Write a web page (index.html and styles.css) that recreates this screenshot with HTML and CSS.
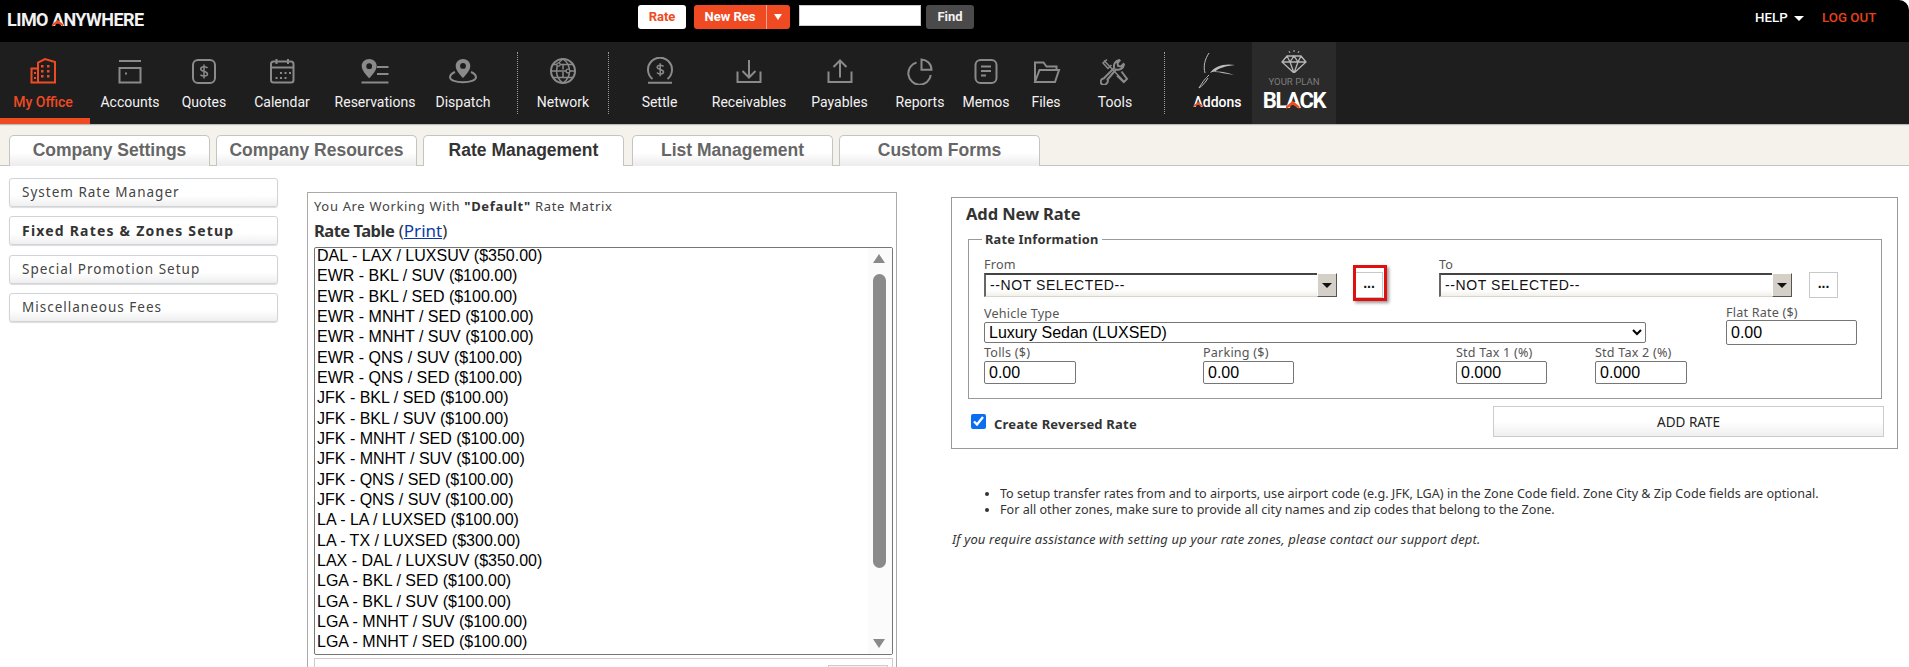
FILE: index.html
```html
<!DOCTYPE html>
<html lang="en">
<head>
<meta charset="utf-8">
<title>Limo Anywhere - Rate Management</title>
<link rel="stylesheet" href="styles.css">
</head>
<body>
<header class="topbar">
  <div class="logo">LIMO <span class="chev-a">A</span>NYWHERE</div>
  <div class="quick">
    <button class="btn-rate">Rate</button>
    <div class="btn-new"><span class="new-label">New Res</span><span class="new-caret"></span></div>
    <input class="find-input" type="text">
    <button class="btn-find">Find</button>
  </div>
  <div class="help"><span>HELP</span><span class="help-caret"></span></div>
  <div class="logout">LOG OUT</div>
</header>

<nav class="nav">
  <a class="item active w90">
    <svg class="ico" viewBox="0 0 30 28"><path d="M3.500 11.500h6.500v14H3.500zM10 25.500V5.500l7-3.500 10 3v20.500zM3.500 25.500h23.500"/><path class="dots" d="M13 8h2.500v2.500H13zM19 8h2.500v2.500H19zM13 13h2.500v2.500H13zM19 13h2.500v2.500H19zM13 18h2.500v2.500H13zM19 18h2.500v2.500H19zM6 15h2v2H6zM6 20h2v2H6z"/></svg>
    <span>My Office</span>
  </a>
  <a class="item w80">
    <svg class="ico" viewBox="0 0 30 28"><path d="M4 4h22M4.500 11h21v14.500h-21z"/><path class="dots" d="M10 15.500h2v2h-2z"/></svg>
    <span>Accounts</span>
  </a>
  <a class="item w68">
    <svg class="ico" viewBox="0 0 30 28"><rect x="4" y="3" width="22" height="23" rx="5"/><path class="thin" d="M18.500 11c-1-1.700-6.500-2-6.800.8-.3 3 6.800 2 6.800 5.200 0 2.700-5.800 2.700-7 .6M15 7.500v14"/></svg>
    <span>Quotes</span>
  </a>
  <a class="item w88">
    <svg class="ico" viewBox="0 0 30 28"><rect x="4" y="4.500" width="22.500" height="21" rx="2.500"/><path d="M4 10.500h22.500M9.500 2v5M21 2v5"/><path class="dots" d="M13 15h2v2h-2zM17.500 15h2v2h-2zM22 15h2v2h-2zM8.500 20h2v2h-2zM13 20h2v2h-2zM17.500 20h2v2h-2z"/></svg>
    <span>Calendar</span>
  </a>
  <a class="item w98">
    <svg class="ico" viewBox="0 0 30 28"><path class="fill" fill-rule="evenodd" d="M9.200 2c4.200 0 7.500 3.100 7.500 7 0 4.200-4.300 9-7.500 12.300C6 18 1.700 13.200 1.700 9c0-3.900 3.300-7 7.500-7zm0 4.300a2.900 2.900 0 1 0 0 5.800 2.900 2.900 0 0 0 0-5.800z"/><path d="M17 10h11.500M17 17h11.500M1.500 25.500h27"/></svg>
    <span>Reservations</span>
  </a>
  <a class="item w78">
    <svg class="ico" viewBox="0 0 30 28"><path class="fill" fill-rule="evenodd" d="M15 2c4.100 0 7.300 3 7.300 6.900 0 4.100-4.100 8.700-7.300 12-3.200-3.300-7.300-7.900-7.300-12C7.700 5 10.900 2 15 2zm0 4a2.900 2.900 0 1 0 0 5.800A2.900 2.900 0 0 0 15 6z"/><path d="M7 15c-3 1.300-5 3-5 5.300 0 3 6 5 13 5s13-2 13-5c0-2.300-2-4-5-5.300"/></svg>
    <span>Dispatch</span>
  </a>
  <i class="sep sep-a"></i>
  <a class="item w90">
    <svg class="ico" viewBox="0 0 30 28"><circle cx="15" cy="14" r="12"/><path class="thin" d="M5 7.500h20M3 14h24M5 20.500h20M15 2c-4.500 3-6.500 7-6.500 12s2 9 6.500 12M15 2c4.500 3 6.500 7 6.500 12s-2 9-6.500 12M15 7.500v5M15 15v5"/><circle class="knob" cx="10.500" cy="7.500" r="1.700"/><circle class="knob" cx="20" cy="14" r="1.900"/></svg>
    <span>Network</span>
  </a>
  <i class="sep"></i>
  <a class="item w101">
    <svg class="ico" viewBox="0 0 30 28"><path d="M7.500 22a12 12 0 1 1 15 0M3 25.700h24"/><path class="thin" d="M18.500 9.500c-1-1.600-6-1.900-6.300.7-.3 2.800 6.300 1.900 6.300 4.800 0 2.500-5.400 2.500-6.500.5M15.200 6.300v13"/></svg>
    <span>Settle</span>
  </a>
  <a class="item w78">
    <svg class="ico" viewBox="0 0 30 28"><path d="M3.500 14.500v10.500h23V14.500M15 3v17M8.500 14l6.500 6.500 6.500-6.500"/></svg>
    <span>Receivables</span>
  </a>
  <a class="item w103">
    <svg class="ico" viewBox="0 0 30 28"><path d="M3.500 14.500v10.500h23V14.500M15 20.500V3.500M8.500 10l6.500-6.500 6.500 6.500"/></svg>
    <span>Payables</span>
  </a>
  <a class="item w58">
    <svg class="ico" viewBox="0 0 30 28"><path d="M11.500 5.500A11.300 11.300 0 1 0 25.800 18"/><path d="M16.500 2.500c5.400.2 10 4.400 10 10.300h-10z"/></svg>
    <span>Reports</span>
  </a>
  <a class="item w70 after-reports">
    <svg class="ico" viewBox="0 0 30 28"><rect x="4.500" y="3" width="21" height="23" rx="5"/><path d="M10 9.500h10M10 14h10M10 18.500h5"/></svg>
    <span>Memos</span>
  </a>
  <a class="item w50">
    <svg class="ico" viewBox="0 0 30 28"><path d="M4 25V5.500h8.500l3 4h10v3.500M4 25l4.500-12H28l-4 12z"/></svg>
    <span>Files</span>
  </a>
  <a class="item w88">
    <svg class="ico" viewBox="0 0 30 28"><path class="thin" d="M4 3.500l20 21M7 2.500L3 6l5 5.500 3.500-3.500"/><path d="M21.500 14.500l5.500 7.500-3.200 3-6.800-6.500"/><path d="M6.500 26.500a3.200 3.200 0 1 1-2.800-5l10.500-10.500c-1-3.500 1-7 5-8l.5.5-2.200 2.500.5 3 3 .5 2.500-2.500.5.5c-.7 4-4.500 6-8 5L7.500 22.500c.5 1 .2 3-1 4z"/></svg>
    <span>Tools</span>
  </a>
  <i class="sep sep-last"></i>
  <a class="item addons">
    <svg class="addons-logo" viewBox="0 0 40 36"><path d="M11 0C7 6 5 13 7 20"/><path class="swoosh" d="M37 12C27 10 16 13 12 20c6-3 15-1 24 2-8-1-14-3-19-3 3-4 11-6 20-7z"/><path d="M11 22C8 25 5 28 1 35c3-2 7-6 9-10"/></svg>
    <span><span class="chev-a">A</span>ddons</span>
  </a>
  <a class="plan">
    <svg class="diamond" viewBox="0 0 26 24"><path d="M6 7h14l5 6-12 11L1 13zM1 13h24M9 13l4 11 4-11-4-6zM6 7l3 6M20 7l-3 6"/><path class="spark" d="M8 2l1 2M13 1v2M18 2l-1 2"/></svg>
    <span class="plan-your">YOUR PLAN</span>
    <span class="plan-black">BL<span class="chev-a">A</span>CK</span>
  </a>
</nav>

<div class="tabs">
  <div class="tab">Company Settings</div>
  <div class="tab">Company Resources</div>
  <div class="tab tab-active">Rate Management</div>
  <div class="tab tab-next">List Management</div>
  <div class="tab">Custom Forms</div>
</div>

<main class="main">
  <aside class="side">
    <a class="side-btn">System Rate Manager</a>
    <a class="side-btn side-on">Fixed Rates &amp; Zones Setup</a>
    <a class="side-btn">Special Promotion Setup</a>
    <a class="side-btn">Miscellaneous Fees</a>
  </aside>

  <section class="table-panel">
    <p class="matrix">You Are Working With <b>"Default"</b> Rate Matrix</p>
    <h2 class="table-title"><b>Rate Table</b> (<a class="print" href="#">Print</a>)</h2>
    <div class="listbox">
      <ul class="rates">
        <li>DAL - LAX / LUXSUV ($350.00)</li>
        <li>EWR - BKL / SUV ($100.00)</li>
        <li>EWR - BKL / SED ($100.00)</li>
        <li>EWR - MNHT / SED ($100.00)</li>
        <li>EWR - MNHT / SUV ($100.00)</li>
        <li>EWR - QNS / SUV ($100.00)</li>
        <li>EWR - QNS / SED ($100.00)</li>
        <li>JFK - BKL / SED ($100.00)</li>
        <li>JFK - BKL / SUV ($100.00)</li>
        <li>JFK - MNHT / SED ($100.00)</li>
        <li>JFK - MNHT / SUV ($100.00)</li>
        <li>JFK - QNS / SED ($100.00)</li>
        <li>JFK - QNS / SUV ($100.00)</li>
        <li>LA - LA / LUXSED ($100.00)</li>
        <li>LA - TX / LUXSED ($300.00)</li>
        <li>LAX - DAL / LUXSUV ($350.00)</li>
        <li>LGA - BKL / SED ($100.00)</li>
        <li>LGA - BKL / SUV ($100.00)</li>
        <li>LGA - MNHT / SUV ($100.00)</li>
        <li>LGA - MNHT / SED ($100.00)</li>
      </ul>
      <div class="scroll">
        <i class="arrow-up"></i>
        <i class="thumb"></i>
        <i class="arrow-down"></i>
      </div>
    </div>
    <div class="table-foot"><i class="foot-btn"></i></div>
  </section>

  <div class="right">
    <section class="add-panel">
      <h2 class="add-title">Add New Rate</h2>
      <fieldset class="info">
        <legend class="legend">Rate Information</legend>
        <div class="row row-zones">
          <div class="field f-from">
            <label class="lbl">From</label>
            <div class="combo"><span class="combo-text">--NOT SELECTED--</span><i class="combo-btn"></i></div>
          </div>
          <div class="more-wrap more-hl"><button class="more">...</button></div>
          <div class="field f-to">
            <label class="lbl">To</label>
            <div class="combo"><span class="combo-text">--NOT SELECTED--</span><i class="combo-btn"></i></div>
          </div>
          <div class="more-wrap more-2"><button class="more">...</button></div>
        </div>
        <div class="row row-vehicle">
          <div class="field f-vehicle">
            <label class="lbl">Vehicle Type</label>
            <select class="vehicle"><option>Luxury Sedan (LUXSED)</option></select>
          </div>
          <div class="field f-flat">
            <label class="lbl lbl-flat">Flat Rate ($)</label>
            <input class="num num-flat" type="text" value="0.00">
          </div>
        </div>
        <div class="row row-fees">
          <div class="field f-tolls"><label class="lbl">Tolls ($)</label><input class="num" type="text" value="0.00"></div>
          <div class="field f-park"><label class="lbl">Parking ($)</label><input class="num" type="text" value="0.00"></div>
          <div class="field f-tax1"><label class="lbl">Std Tax 1 (%)</label><input class="num" type="text" value="0.000"></div>
          <div class="field f-tax2"><label class="lbl">Std Tax 2 (%)</label><input class="num" type="text" value="0.000"></div>
        </div>
      </fieldset>
      <div class="actions">
        <label class="reverse"><input class="check" type="checkbox" checked><span class="rev-text">Create Reversed Rate</span></label>
        <button class="add-btn">ADD RATE</button>
      </div>
    </section>
    <ul class="notes">
      <li>To setup transfer rates from and to airports, use airport code (e.g. JFK, LGA) in the Zone Code field. Zone City &amp; Zip Code fields are optional.</li>
      <li>For all other zones, make sure to provide all city names and zip codes that belong to the Zone.</li>
    </ul>
    <p class="assist">If you require assistance with setting up your rate zones, please contact our support dept.</p>
  </div>
</main>
</body>
</html>
```

FILE: styles.css
```css
* { box-sizing: border-box; }
html, body { margin: 0; padding: 0; height: 667px; overflow: hidden; background: #fff; }
body { font-family: "Noto Sans", sans-serif; color: #333; width: 1909px; }

/* top bar */
.topbar {
  height: 42px; background: #000; border-top-right-radius: 10px;
  display: flex; align-items: flex-start; font-family: Roboto, sans-serif;
}
.logo {
  width: 638px; padding: 10px 0 0 7px; color: #f2f2f2;
  font-size: 18px; font-weight: 700; line-height: 20px; white-space: nowrap; letter-spacing: -.55px;
}
.chev-a { position: relative; display: inline-block; }
.chev-a::after {
  content: ""; position: absolute; left: 0; right: 0; bottom: 17%; height: 34%;
  background: #f04a23; clip-path: polygon(50% 0, 100% 70%, 100% 100%, 50% 50%, 0 100%, 0 70%);
}
.quick { display: flex; align-items: flex-start; padding-top: 5px; width: 1117px; }
.btn-rate, .btn-find, .btn-new {
  height: 24px; border: 0; border-radius: 3px; font: 700 13px/24px Roboto, sans-serif; padding: 0;
}
.btn-rate { width: 48px; background: #fff; color: #f04a23; }
.btn-new {
  width: 96px; margin-left: 8px; background: #f04a23; color: #fff; display: flex;
}
.new-label { width: 73px; text-align: center; border-right: 1px solid #f9a48f; }
.new-caret { width: 0; height: 0; margin: 9px 0 0 7px; border: 4.500px solid transparent; border-top: 6px solid #fff; border-bottom: 0; }
.find-input { width: 122px; height: 21px; margin-left: 9px; background: #fff; border: 1px solid #ccc; padding: 0; }
.btn-find { width: 48px; margin-left: 5px; background: #4a4a4a; color: #f2f2f2; }
.help { display: flex; width: 67px; padding-top: 10px; color: #fff; font: 500 13.300px/16px Roboto, sans-serif; }
.help-caret { width: 0; height: 0; margin: 6px 0 0 6px; border: 5px solid transparent; border-top: 5px solid #fff; border-bottom: 0; }
.logout { padding-top: 10px; color: #e8401c; font: 500 13.300px/16px Roboto, sans-serif; }

/* icon nav */
.nav {
  height: 82px; background: #1e1e1e; display: flex; font-family: Roboto, sans-serif;
  box-shadow: 0 1px 1px #bbb; position: relative;
}
.item { display: flex; flex-direction: column; align-items: center; padding-top: 15px; color: #f2f2f2; font-size: 14px; line-height: 16px; white-space: nowrap; }
.item > span { display: block; margin-top: 9px; }
.active { color: #f04a23; border-bottom: 6px solid #f04a23; padding-right: 4px; font-weight: 500; }
.w50 { width: 50px; } .w58 { width: 58px; } .w68 { width: 68px; } .w70 { width: 70px; }
.w78 { width: 78px; } .w80 { width: 80px; } .w88 { width: 88px; }
.w90 { width: 90px; } .w98 { width: 98px; } .w101 { width: 101px; } .w103 { width: 103px; }
.after-reports { margin-left: 2px; }
.ico { width: 30px; height: 28px; fill: none; stroke: #8a8a8a; stroke-width: 2; }
.ico .thin { stroke-width: 1.500; }
.ico .dots { fill: #8a8a8a; stroke: none; }
.ico .fill { fill: #8a8a8a; stroke: none; }
.ico .knob { fill: #1e1e1e; stroke-width: 1.300; }
.active .ico { stroke: #f04a23; }
.active .ico .dots { fill: #f04a23; }
.sep { width: 0; height: 62px; margin-top: 10px; border-left: 1px dotted #999; }
.sep-a { margin-left: 15px; }
.sep-last { margin-left: 5px; }
.addons { width: 87px; padding: 11px 0 0 18px; }
.addons-logo { width: 40px; height: 36px; flex: none; fill: none; stroke: #bdbdbd; stroke-width: 1; }
.addons-logo .swoosh { fill: #bdbdbd; stroke: none; }
.addons > span { margin-top: 5px; font-weight: 500; color: #fff; }
.plan { width: 84px; height: 82px; background: #2a2a2a; display: flex; flex-direction: column; align-items: center; padding-top: 7px; font-family: Roboto, sans-serif; }
.diamond { width: 26px; height: 24px; flex: none; fill: none; stroke: #b5b5b5; stroke-width: 1.300; }
.spark { stroke: #b5b5b5; stroke-width: 1; }
.plan-your { color: #7d7d7d; font-size: 9.600px; line-height: 12px; margin-top: 3px; white-space: nowrap; }
.plan-black { color: #fff; font-size: 22px; font-weight: 700; line-height: 24px; margin-top: 1px; letter-spacing: -1.300px; }

/* tabs */
.tabs {
  height: 42px; background: #f5f2ec; border-bottom: 1px solid #c4c4c4; padding: 11px 0 0 9px;
  display: flex; gap: 6px;
}
.tab {
  width: 201px; height: 31px; border: 1px solid #c4c4c4; border-bottom: 0; border-radius: 5px 5px 0 0;
  background: linear-gradient(#fff 55%, #ececec);
  color: #666; font: 700 17.500px/29px "Liberation Sans", sans-serif; text-align: center; white-space: nowrap;
}
.tab-active { background: #fff; color: #333; }
.tab-next { margin-left: 2px; }

/* main */
.main { display: flex; align-items: flex-start; }
.side { width: 269px; margin: 12px 0 0 9px; display: flex; flex-direction: column; gap: 9.400px; }
.side-btn {
  height: 29px; border: 1px solid #d0d4d8; border-radius: 3px; padding-left: 12px;
  background: linear-gradient(#fff 60%, #efefef); box-shadow: 0 1px 1px #ddd;
  font: 13.500px/27px "Noto Sans", sans-serif; color: #444; letter-spacing: 1px; white-space: nowrap;
}
.side-on { font-weight: 700; color: #333; font-size: 14px; letter-spacing: 1.200px; }

.table-panel {
  width: 590px; height: 480px; margin: 26px 0 0 29px; border: 1px solid #aaa; border-bottom: 0;
  padding: 5px 3px 0 6px;
}
.matrix { margin: 0; font: 13px/16px "Noto Sans", sans-serif; color: #444; letter-spacing: .66px; height: 17px; white-space: nowrap; }
.matrix b { color: #333; }
.table-title { margin: 0; height: 32px; padding-top: 6px; font: 400 17px/20px "Noto Sans", sans-serif; color: #333; }
.table-title b { font-size: 16.500px; letter-spacing: -.5px; }
.print { color: #0b3aa5; text-decoration: underline; }

.listbox {
  width: 579px; height: 408px; border: 1px solid #767676; border-radius: 2px; position: relative; overflow: hidden; background: #fff;
}
.rates { list-style: none; margin: -2px 0 0; padding: 0 0 0 2px; font: 16px/20.330px "Liberation Sans", sans-serif; color: #000; }
.rates li { height: 20.330px; white-space: nowrap; }
.scroll { position: absolute; top: 0; right: 0; width: 24px; height: 100%; background: #fbfbfb; }
.thumb { position: absolute; left: 5px; top: 26px; width: 13px; height: 294px; border-radius: 7px; background: #8a8a8a; }
.arrow-up, .arrow-down { position: absolute; left: 5px; width: 0; height: 0; border: 6.500px solid transparent; }
.arrow-up { top: 6px; border-top: 0; border-bottom: 9px solid #8a8a8a; }
.arrow-down { bottom: 6px; border-bottom: 0; border-top: 9px solid #8a8a8a; }
.table-foot { width: 579px; height: 20px; margin-top: 3px; border: 1px solid #ccc; position: relative; }
.foot-btn { position: absolute; right: 4px; top: 6px; width: 60px; height: 20px; background: #f2f2f2; border: 1px solid #ccc; }

/* right */
.right { width: 947px; margin: 31px 0 0 54px; }
.add-panel { height: 252px; border: 1px solid #999; padding: 0 0 0 16px; }
.add-title { margin: 0 0 0 -2px; padding-top: 6px; height: 34px; font: 700 16.500px/20px "Noto Sans", sans-serif; color: #333; letter-spacing: -.1px; }
.info { margin: 0; width: 914px; height: 167px; border: 1px solid #999; padding: 0 0 0 15px; display: block; min-width: 0; }
.legend { margin-left: -2px; padding: 0 3px; font: 700 12.800px/14px "Noto Sans", sans-serif; color: #333; letter-spacing: .2px; }
.row { display: flex; align-items: flex-start; }
.row-zones { padding-top: 11px; height: 60px; }
.row-vehicle { height: 39px; }
.field { display: flex; flex-direction: column; flex: none; }
.lbl { font: 12.600px/16px "Noto Sans", sans-serif; color: #555; white-space: nowrap; height: 16px; letter-spacing: .2px; }
.lbl-flat { height: 15px; }
.f-from { width: 353px; }
.f-to { width: 353px; margin-left: 56px; }
.combo {
  height: 24px; width: 100%; position: relative; display: flex; align-items: center;
  border-top: 2px solid #444; border-left: 2px solid #666; border-bottom: 1px solid #d8d5cc;
  background: linear-gradient(#fff 70%, #f2f0ea); padding: 0 0 1px 4px;
}
.combo-text { font: 14px/20px "Liberation Sans", sans-serif; color: #111; letter-spacing: .58px; }
.combo-btn { position: absolute; right: 0; top: -2px; width: 20px; height: 24px; background: #d4d0c8; border: 1px solid #fff; border-right-color: #555; border-bottom-color: #555; }
.combo-btn::after { content: ""; position: absolute; left: 4px; top: 9px; border: 5px solid transparent; border-top: 5px solid #111; border-bottom: 0; }
.more-wrap { margin: 15px 0 0 18px; width: 28px; height: 26px; position: relative; flex: none; }
.more-2 { margin-left: 17px; width: 29px; }
.more { display: block; width: 100%; height: 100%; background: #fff; border: 1px solid #c8c8c8; font: 700 14px/16px "Liberation Sans", sans-serif; color: #111; padding: 0 0 4px; }
.more-hl::after { content: ""; position: absolute; left: -2px; right: -4px; top: -7px; bottom: -3px; border: 3px solid #e01010; box-shadow: 2px 2px 3px #999; pointer-events: none; }
.f-vehicle { width: 662px; }
.f-flat { width: 131px; margin-left: 80px; margin-top: -1px; }
.vehicle { width: 662px; height: 21px; font: 16px "Liberation Sans", sans-serif; color: #000; background: #fff; border: 1px solid #767676; border-radius: 2px; padding: 0; }
.num { height: 23px; width: 100%; border: 1px solid #767676; border-radius: 2px; padding: 0 4px; font: 16px "Liberation Sans", sans-serif; color: #000; background: #fff; }
.num-flat { height: 25px; }
.f-tolls { width: 92px; }
.f-park { width: 91px; margin-left: 127px; }
.f-tax1 { width: 91px; margin-left: 162px; }
.f-tax2 { width: 92px; margin-left: 48px; }

.actions { display: flex; align-items: flex-start; margin-top: 7px; }
.reverse { width: 525px; display: flex; align-items: center; font: 700 13px/16px "Noto Sans", sans-serif; color: #333; height: 31px; padding: 0 0 0 3px; white-space: nowrap; letter-spacing: .2px; }
.rev-text { margin-top: 5px; }
.check { width: 15px; height: 15px; margin: 0 8px 0 0; accent-color: #0a6ef0; }
.add-btn { width: 391px; height: 31px; border: 1px solid #ccc; background: linear-gradient(#fff 50%, #efefef); font: 13.500px "Noto Sans", sans-serif; color: #222; }

.notes { margin: 0; padding: 37px 0 0 49px; font: 12.600px/16px "Noto Sans", sans-serif; color: #333; white-space: nowrap; }
.assist { margin: 13px 0 0 1px; font: italic 13px/16px "Noto Sans", sans-serif; color: #333; white-space: nowrap; letter-spacing: .15px; }
```
